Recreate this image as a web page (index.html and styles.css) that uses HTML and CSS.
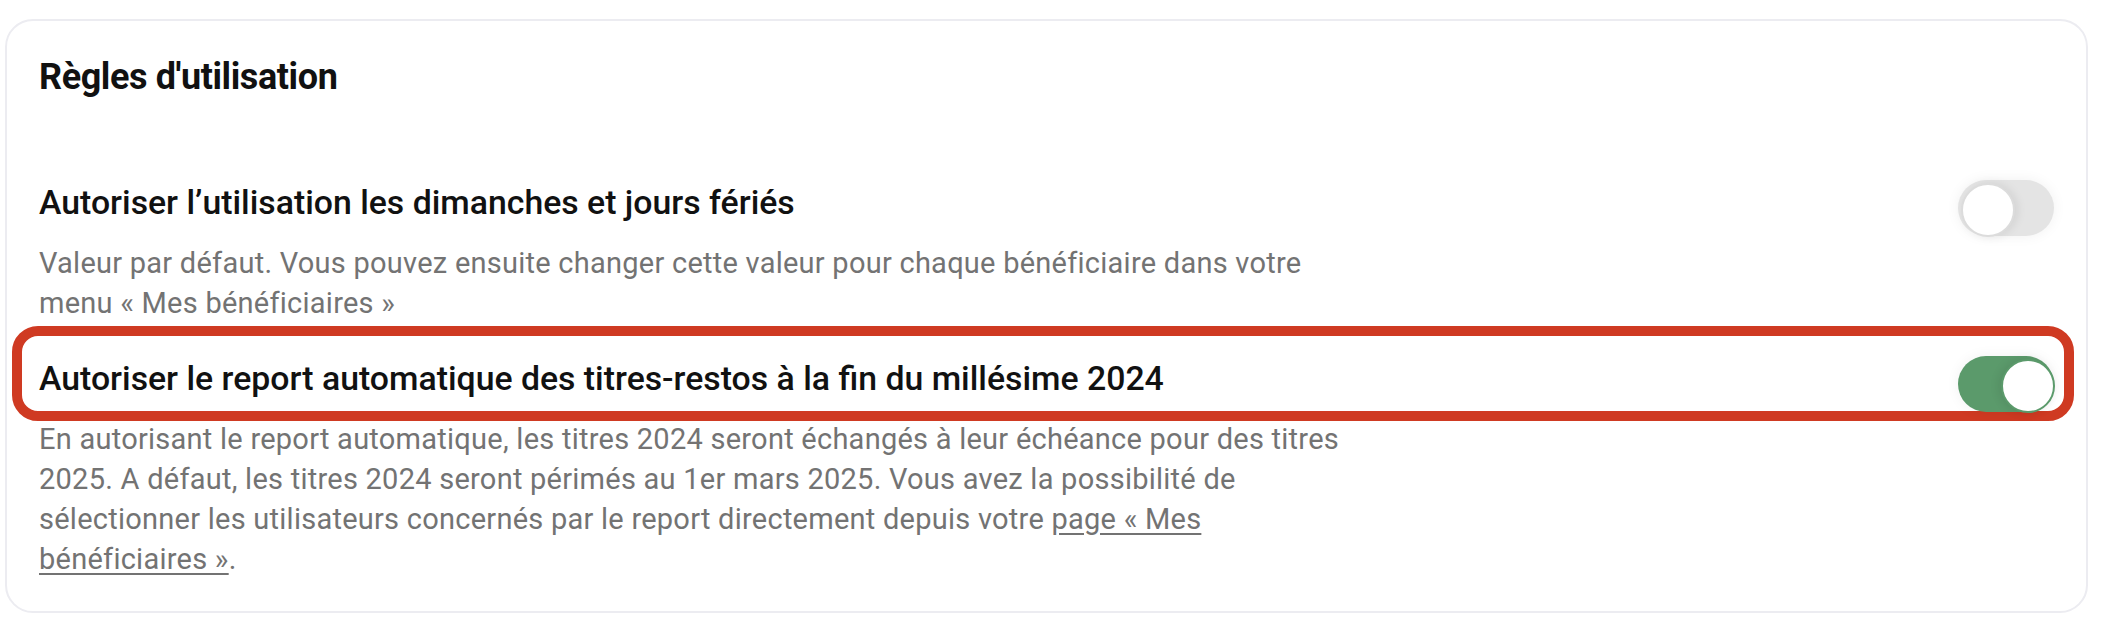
FILE: index.html
```html
<!DOCTYPE html>
<html lang="fr">

<head>
	<meta charset="utf-8">
	<title>Règles d'utilisation</title>
	<link rel="stylesheet" href="styles.css">
</head>

<body>
	<section class="card">
		<h2 class="card-title">Règles d'utilisation</h2>

		<div class="setting">
			<div class="setting-head">
				<span class="setting-label">Autoriser l’utilisation les dimanches et jours fériés</span>
				<label class="switch">
					<input type="checkbox">
					<span class="slider"></span>
				</label>
			</div>
			<p class="setting-desc">Valeur par défaut. Vous pouvez ensuite changer cette valeur pour chaque bénéficiaire dans votre menu « Mes bénéficiaires »</p>
		</div>

		<div class="setting setting-marked">
			<div class="setting-head">
				<span class="mark"></span>
				<span class="setting-label">Autoriser le report automatique des titres-restos à la fin du millésime 2024</span>
				<label class="switch">
					<input type="checkbox" checked>
					<span class="slider"></span>
				</label>
			</div>
			<p class="setting-desc">En autorisant le report automatique, les titres 2024 seront échangés à leur échéance pour des titres 2025. A défaut, les titres 2024 seront périmés au 1er mars 2025. Vous avez la possibilité de sélectionner les utilisateurs concernés par le report directement depuis votre <a href="#">page « Mes bénéficiaires »</a>.</p>
		</div>
	</section>
</body>

</html>
```

FILE: styles.css
```css
* {
	box-sizing: border-box;
}

body {
	margin: 0;
	padding: 19px 20px 31px 5px;
	background: #fff;
	font-family: Roboto, "Noto Sans", sans-serif;
	color: #111;
}

.card {
	border: 2px solid #ececf1;
	border-radius: 28px;
	padding: 36px 32px 32px 32px;
	background: #fff;
}

.card-title {
	margin: 0 0 83px;
	font-size: 36px;
	line-height: 40px;
	font-weight: 700;
	letter-spacing: -0.4px;
}

.setting + .setting {
	margin-top: 33px;
}

.setting-head {
	position: relative;
	display: flex;
	align-items: center;
	justify-content: space-between;
	gap: 40px;
}

.setting-label {
	margin-bottom: 10px;
	font-size: 33.8px;
	line-height: 40px;
	font-weight: 500;
}

.setting-desc {
	max-width: 1320px;
	margin: 7px 0 0;
	font-size: 29px;
	line-height: 40px;
	letter-spacing: 0.25px;
	color: #737373;
}

.setting-desc a {
	color: inherit;
	text-decoration: underline;
	text-underline-offset: 4px;
}

/* annotation drawn around the second setting */
.mark {
	position: absolute;
	top: -30px;
	left: -27px;
	right: -20px;
	bottom: -9px;
	border: 10px solid #cf3a22;
	border-radius: 26px;
	pointer-events: none;
}

.switch {
	position: relative;
	z-index: 1;
	flex: none;
	width: 96px;
	height: 56px;
}

.switch input {
	position: absolute;
	opacity: 0;
	width: 0;
	height: 0;
}

.slider {
	position: absolute;
	inset: 0;
	border-radius: 28px;
	background: #e4e4e4;
	box-shadow: 0 0 14px rgba(0, 0, 0, 0.06);
}

.slider::before {
	content: "";
	position: absolute;
	top: 3px;
	left: 3px;
	width: 50px;
	height: 50px;
	border-radius: 50%;
	background: #fff;
	border: 2px solid #dcdcdc;
	box-shadow: 3px 0 10px rgba(0, 0, 0, 0.08);
}

.switch input:checked + .slider {
	background: #5b9a6b;
}

.switch input:checked + .slider::before {
	left: 43px;
	border-color: #5b9a6b;
	box-shadow: -3px 0 10px rgba(0, 0, 0, 0.08);
}
```
